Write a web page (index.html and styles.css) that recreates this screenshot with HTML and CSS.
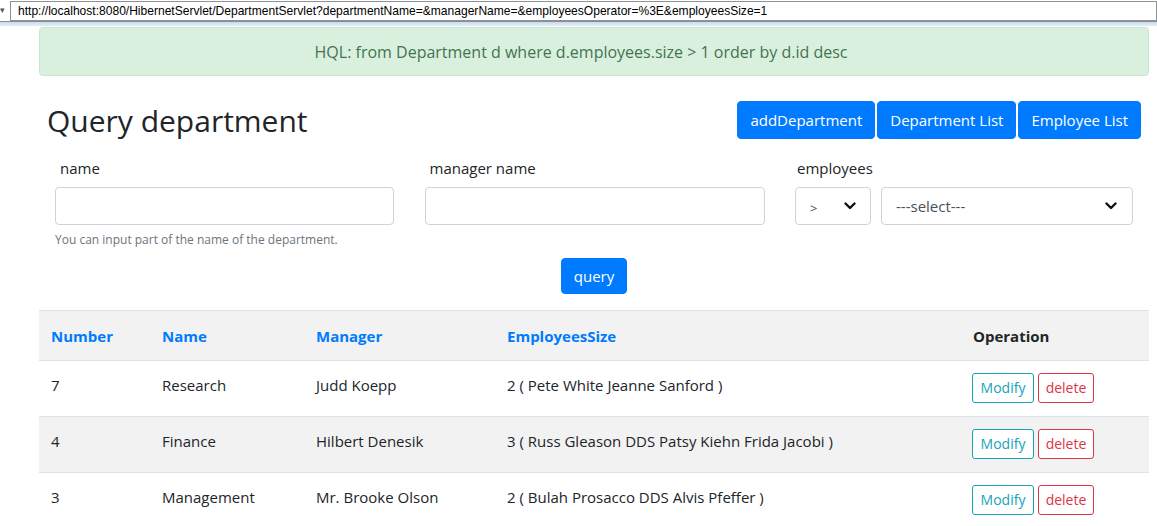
FILE: index.html
```html
<!DOCTYPE html>
<html>
<head>
<meta charset="utf-8">
<link rel="stylesheet" href="styles.css">
</head>
<body>
<div class="addressbar">
  <span class="drop">&#9662;</span>
  <div class="urlbox">http://localhost:8080/HibernetServlet/DepartmentServlet?departmentName=&amp;managerName=&amp;employeesOperator=%3E&amp;employeesSize=1</div>
</div>
<div class="strip"></div>
<div class="container">
  <div class="alert"><span>HQL: from Department d where d.employees.size &gt; 1 order by d.id desc</span></div>
  <div class="header">
    <h1 class="title">Query department</h1>
    <div class="actions">
      <a class="btn btn-primary">addDepartment</a>
      <a class="btn btn-primary">Department List</a>
      <a class="btn btn-primary">Employee List</a>
    </div>
  </div>
  <form class="query-form">
    <div class="field">
      <label class="lbl">name</label>
      <input class="control" type="text">
      <small class="help">You can input part of the name of the department.</small>
    </div>
    <div class="field">
      <label class="lbl">manager name</label>
      <input class="control" type="text">
    </div>
    <div class="field">
      <label class="lbl lbl-tight">employees</label>
      <div class="select-row">
        <div class="select-wrap small">
          <select class="control select op"><option>&gt;</option></select>
          <svg class="chev" width="12" height="8" viewBox="0 0 12 8"><path d="M1.5 1.5 L6 6 L10.5 1.5" fill="none" stroke="#111" stroke-width="2.4" stroke-linecap="round" stroke-linejoin="round"/></svg>
        </div>
        <div class="select-wrap big">
          <select class="control select"><option>---select---</option></select>
          <svg class="chev" width="12" height="8" viewBox="0 0 12 8"><path d="M1.5 1.5 L6 6 L10.5 1.5" fill="none" stroke="#111" stroke-width="2.4" stroke-linecap="round" stroke-linejoin="round"/></svg>
        </div>
      </div>
    </div>
    <div class="submit-row">
      <button type="button" class="btn btn-primary query">query</button>
    </div>
  </form>
  <table class="table">
    <thead>
      <tr>
        <th class="c1"><a>Number</a></th>
        <th class="c2"><a>Name</a></th>
        <th class="c3"><a>Manager</a></th>
        <th class="c4"><a>EmployeesSize</a></th>
        <th class="c5">Operation</th>
      </tr>
    </thead>
    <tbody>
      <tr>
        <td>7</td><td>Research</td><td>Judd Koepp</td><td>2 ( Pete White Jeanne Sanford )</td>
        <td><a class="btn-sm info">Modify</a><a class="btn-sm danger">delete</a></td>
      </tr>
      <tr class="alt">
        <td>4</td><td>Finance</td><td>Hilbert Denesik</td><td>3 ( Russ Gleason DDS Patsy Kiehn Frida Jacobi )</td>
        <td><a class="btn-sm info">Modify</a><a class="btn-sm danger">delete</a></td>
      </tr>
      <tr>
        <td>3</td><td>Management</td><td>Mr. Brooke Olson</td><td>2 ( Bulah Prosacco DDS Alvis Pfeffer )</td>
        <td><a class="btn-sm info">Modify</a><a class="btn-sm danger">delete</a></td>
      </tr>
    </tbody>
  </table>
</div>
</body>
</html>
```
FILE: styles.css
```css
* { box-sizing: border-box; }
html, body { margin: 0; padding: 0; background: #fff; overflow: hidden; }
body {
  font-family: "Open Sans", "Noto Sans", sans-serif;
  font-size: 15px;
  color: #212529;
}
.addressbar {
  height: 22px;
  display: flex;
  align-items: flex-start;
  background: #fff;
  border-bottom: 1px solid #8a8f96;
}
.drop {
  width: 10px;
  font-size: 9px;
  line-height: 20px;
  color: #555;
  font-family: "DejaVu Sans", sans-serif;
}
.urlbox {
  flex: 1;
  height: 20px;
  margin-top: 1px;
  border: 1px solid #8e9297;
  padding-left: 7px;
  font-family: "Liberation Sans", Arial, sans-serif;
  font-size: 12.05px;
  line-height: 18px;
  color: #000;
}
.strip {
  height: 4px;
  background: linear-gradient(#c9dbef, #e3edf8);
}
.container {
  margin-left: 39px;
  width: 1110px;
}
.alert {
  margin-top: 1px;
  height: 49px;
  background: #daf0df;
  border: 1px solid #c7e7cf;
  border-radius: 4px;
  color: #44744f;
  display: flex;
  align-items: center;
  justify-content: center;
  padding-right: 26px;
  font-size: 16px;
}
.header {
  display: flex;
  justify-content: space-between;
  align-items: center;
  padding: 0 8px;
  margin-top: 24px;
  height: 40px;
}
.title {
  margin: 0;
  font-weight: 400;
  font-size: 30px;
  line-height: 40px;
  padding-top: 2px;
  color: #212529;
}
.actions { display: flex; gap: 2px; }
.btn {
  display: inline-flex;
  align-items: center;
  justify-content: center;
  height: 38px;
  padding: 0 12px;
  border-radius: 4px;
  font-size: 15px;
  font-family: inherit;
  border: 1px solid #007bff;
  cursor: pointer;
}
.btn-primary { background: #007bff; color: #fff; }
.query-form {
  display: grid;
  grid-template-columns: 339px 340px 338px;
  column-gap: 30.5px;
  padding: 0 16px;
  margin-top: 15px;
}
.field { display: flex; flex-direction: column; }
.lbl {
  padding-left: 5px;
  height: 32px;
  line-height: 26px;
  font-size: 15px;
  color: #212529;
}
.lbl-tight { padding-left: 2px; }
.control {
  height: 38px;
  width: 100%;
  border: 1px solid #ced4da;
  border-radius: 4px;
  background: #fff;
  font-family: inherit;
  font-size: 15px;
  color: #495057;
  padding: 0 14px;
  margin: 0;
}
.help {
  margin-top: 6px;
  font-size: 12px;
  color: #6c757d;
}
.select-row { display: flex; gap: 10px; }
.select-wrap { position: relative; }
.select-wrap.small { width: 76px; }
.select-wrap.big { flex: 1; }
.select { appearance: none; -webkit-appearance: none; }
.select.op { font-size: 13px; padding-left: 14px; padding-top: 3px; }
.chev { position: absolute; top: 15px; right: 15px; }
.select-wrap.big .chev { right: 16px; }
.submit-row {
  grid-column: 1 / 4;
  display: flex;
  justify-content: center;
  margin-top: 10px;
}
.query { height: 36px; width: 66px; padding: 0; }
.table {
  width: 100%;
  border-collapse: collapse;
  margin-top: 16px;
}
.table th, .table td {
  text-align: left;
  padding: 0 12px;
  border-top: 1px solid #dee2e6;
  vertical-align: middle;
}
.table thead tr { background: #f2f2f2; height: 50px; }
.table th { font-weight: 700; font-size: 15px; }
.table th a { color: #007bff; }
.table tbody tr { height: 56px; }
.table tbody tr.alt { background: #f2f2f2; }
.table td { font-size: 15px; padding-bottom: 8px; }
.c1 { width: 111px; }
.c2 { width: 154px; }
.c3 { width: 191px; }
.c4 { width: 465px; }
.c5 { padding-left: 13px !important; }
.btn-sm {
  display: inline-flex;
  align-items: center;
  justify-content: center;
  height: 30px;
  padding: 0 8px;
  border-radius: 3px;
  font-size: 14px;
  margin-right: 4px;
  background: #fff;
  margin-top: 6px;
}
.info { border: 1px solid #17a2b8; color: #17a2b8; width: 62px; }
.danger { border: 1px solid #dc3545; color: #dc3545; width: 56px; }
```
